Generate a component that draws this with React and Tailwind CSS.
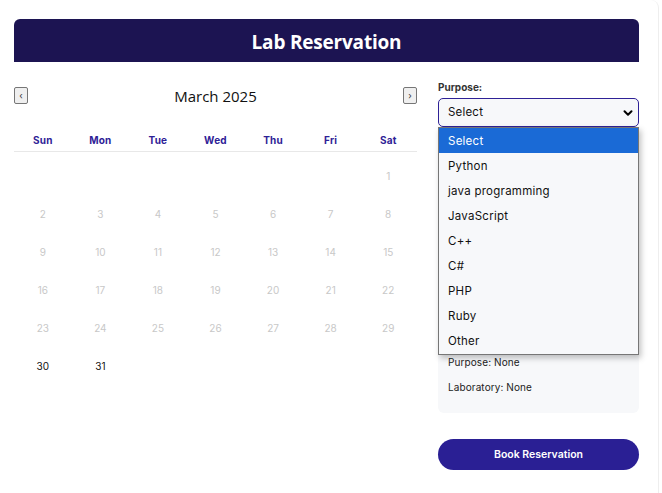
import React from "react";

const days = [
  [null, null, null, null, null, null, 1],
  [2, 3, 4, 5, 6, 7, 8],
  [9, 10, 11, 12, 13, 14, 15],
  [16, 17, 18, 19, 20, 21, 22],
  [23, 24, 25, 26, 27, 28, 29],
  [30, 31, null, null, null, null, null],
];

const weekdays = ["Sun", "Mon", "Tue", "Wed", "Thu", "Fri", "Sat"];
const options = ["Select", "Python", "java programming", "JavaScript", "C++", "C#", "PHP", "Ruby", "Other"];

export default function App() {
  return (
    <div className="relative w-[662px] h-[493px] bg-white overflow-hidden font-['Inter',sans-serif]">
      <div className="w-[659px] h-[493px] border-r border-[#eeeeee] rounded-tr-lg pt-[19px] pl-[14px] pr-[19px]">
        <div className="h-[43px] rounded-t-md bg-[#1c1452] flex items-center justify-center pt-[3px]">
          <h1 className="text-white font-bold text-[19px] font-['Open_Sans',sans-serif] tracking-[-0.2px]">
            Lab Reservation
          </h1>
        </div>
        <div className="flex gap-[21px]">
          <div className="w-[403px]">
            <div className="mt-[25px] h-[17px] flex items-center justify-between">
              <button className="w-[14px] h-[17px] border border-[#767676] bg-[#efefef] rounded-[2px] flex items-center justify-center text-[9px] text-[#333] leading-none">
                ‹
              </button>
              <span className="text-[15px] text-[#111] font-['Open_Sans',sans-serif] pt-[1px]">March 2025</span>
              <button className="w-[14px] h-[17px] border border-[#767676] bg-[#efefef] rounded-[2px] flex items-center justify-center text-[9px] text-[#333] leading-none">
                ›
              </button>
            </div>
            <div className="mt-[23px] h-[25px] pt-[2px] grid grid-cols-7 items-center border-b border-[#e8e8e8]">
              {weekdays.map((w) => (
                <div key={w} className="text-center text-[10px] font-bold text-[#2e2196] tracking-[0.2px]">
                  {w}
                </div>
              ))}
            </div>
            <div className="mt-[5px]">
              {days.map((row, i) => (
                <div key={i} className="grid grid-cols-7 h-[38px] items-center">
                  {row.map((d, j) => (
                    <div
                      key={j}
                      className={`text-center text-[10px] ${d >= 30 ? "text-[#111]" : "text-[#c8c8c8]"}`}
                    >
                      {d ?? ""}
                    </div>
                  ))}
                </div>
              ))}
            </div>
          </div>
          <div className="w-[201px]">
            <div className="mt-[18px] h-[14px] flex items-center text-[10px] font-bold text-[#333]">Purpose:</div>
            <div className="mt-[4px] h-[29px] rounded-[5px] border border-[#2e2196] bg-[#f7f8fa] flex items-center justify-between pl-[9px] pr-[4px] text-[11.5px] text-[#111]">
              <span className="pt-[1px] tracking-[0.2px]">Select</span>
              <svg width="12" height="12" viewBox="0 0 12 12">
                <path d="M2.5 4.2 L6 7.7 L9.5 4.2" fill="none" stroke="#000" strokeWidth="2" strokeLinecap="round" strokeLinejoin="round" />
              </svg>
            </div>
            <div className="mt-[16px] h-[270px] rounded-md bg-[#f7f8fa] flex flex-col justify-end px-[10px] pb-[14px] text-[10px] text-[#222] tracking-[0.1px]">
              <div className="h-[25px] flex items-center pt-[1px]">Purpose: None</div>
              <div className="h-[25px] flex items-center pt-[1px]">Laboratory: None</div>
            </div>
            <button className="mt-[26px] w-full h-[31px] rounded-full bg-[#2a1f94] text-white text-[10.5px] font-semibold pt-[1px]">
              Book Reservation
            </button>
          </div>
        </div>
      </div>
      <div className="absolute left-[438px] top-[127px] w-[201px] h-[228px] border border-[#767676] bg-[#f7f8fa] shadow-[2px_3px_6px_rgba(0,0,0,0.25)] text-[11.5px] tracking-[0.25px]">
        {options.map((o, i) => (
          <div
            key={o}
            className={`h-[25px] flex items-center pl-[9px] pt-[2px] ${i === 0 ? "bg-[#1a6ad6] text-white" : "text-[#111]"}`}
          >
            {o}
          </div>
        ))}
      </div>
    </div>
  );
}
